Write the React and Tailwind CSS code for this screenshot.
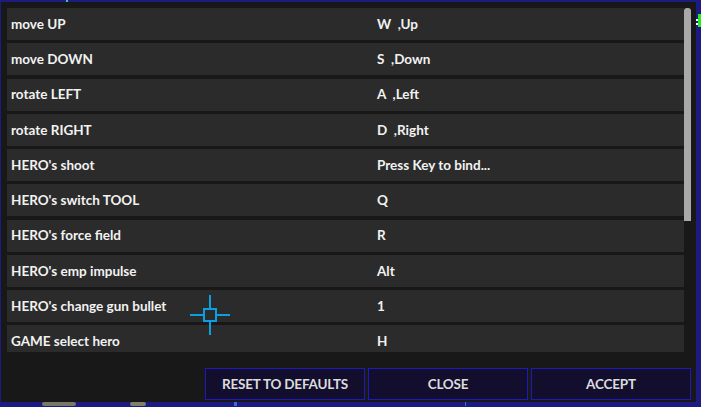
import React from "react";

const bindings = [
  ["move UP", "W  ,Up"],
  ["move DOWN", "S  ,Down"],
  ["rotate LEFT", "A  ,Left"],
  ["rotate RIGHT", "D  ,Right"],
  ["HERO's shoot", "Press Key to bind..."],
  ["HERO's switch TOOL", "Q"],
  ["HERO's force field", "R"],
  ["HERO's emp impulse", "Alt"],
  ["HERO's change gun bullet", "1"],
  ["GAME select hero", "H"],
];

/* crosshair cursor drawn over the list */
const Crosshair = () => (
  <svg
    className="absolute left-[190px] top-[295px]"
    width="40"
    height="40"
    viewBox="0 0 40 40"
  >
    <g fill="#0a9fe2">
      <rect x="19" y="0" width="2" height="13" />
      <rect x="19" y="27" width="2" height="13" />
      <rect x="0" y="19" width="13" height="2" />
      <rect x="27" y="19" width="13" height="2" />
    </g>
    <rect x="14" y="14" width="12" height="12" fill="none" stroke="#0a9fe2" strokeWidth="2" />
  </svg>
);

export default function App() {
  return (
    <div
      className="relative w-[701px] h-[407px] overflow-hidden bg-[#1c1b82] text-[#f2f2f2] flex flex-col"
      style={{ fontFamily: 'Lato, "Open Sans", sans-serif' }}
    >
      {/* top edge of the game scene */}
      <div className="h-[2px] flex">
        <div className="ml-[66px] w-[2px] bg-[#3fc59a]" />
      </div>

      <div className="h-[400px] flex">
        <div className="w-px" />
        <div className="w-[696px] bg-[#181818] flex flex-col pt-[6px] pl-[6px] pr-[5px]">
          {/* list + scrollbar */}
          <div className="flex h-[344px]">
            <div className="flex-1 overflow-hidden flex flex-col gap-[3.25px]">
              {bindings.map(([action, key]) => (
                <div
                  key={action}
                  className="shrink-0 h-8 bg-[#2b2b2b] flex items-center text-[13.5px] font-bold"
                >
                  <div className="w-[370px] pl-[4px]">{action}</div>
                  <div className="whitespace-pre">{key}</div>
                </div>
              ))}
            </div>
            <div className="w-[7px] flex flex-col">
              <div className="h-[213px] bg-[#a9a9a9] rounded-t-[3px]" />
            </div>
          </div>

          {/* buttons */}
          <div className="mt-[16px] flex justify-end gap-[3px]">
            {["RESET TO DEFAULTS", "CLOSE", "ACCEPT"].map((label) => (
              <button
                key={label}
                className="w-[160px] h-8 bg-[#130d2e] border border-[#1d1cb8] text-[13.5px] tracking-[-0.2px] font-bold text-[#dcdcdc]"
              >
                {label}
              </button>
            ))}
          </div>
        </div>
        {/* scene peeking out on the right */}
        <div className="flex-1 flex items-start pt-[12px]">
          <div className="w-[2px] flex flex-col gap-[2px] pt-[5px]">
            <div className="h-[2px] bg-white" />
            <div className="h-[2px] bg-white" />
          </div>
          <div className="w-[3px] h-[13px] bg-[#22f022]" />
        </div>
      </div>

      {/* bottom edge of the game scene */}
      <div className="flex-1 flex items-end pb-px">
        <div className="ml-[42px] w-[34px] h-[4px] rounded-full bg-[#b8b45a] opacity-60" />
        <div className="ml-[54px] w-[16px] h-[4px] rounded-full bg-[#c8c260] opacity-60" />
        <div className="ml-[88px] w-[3px] h-[4px] bg-[#3a6ad8]" />
        <div className="ml-[228px] w-px h-[4px] bg-[#3a6ad8]" />
      </div>

      <Crosshair />
    </div>
  );
}
